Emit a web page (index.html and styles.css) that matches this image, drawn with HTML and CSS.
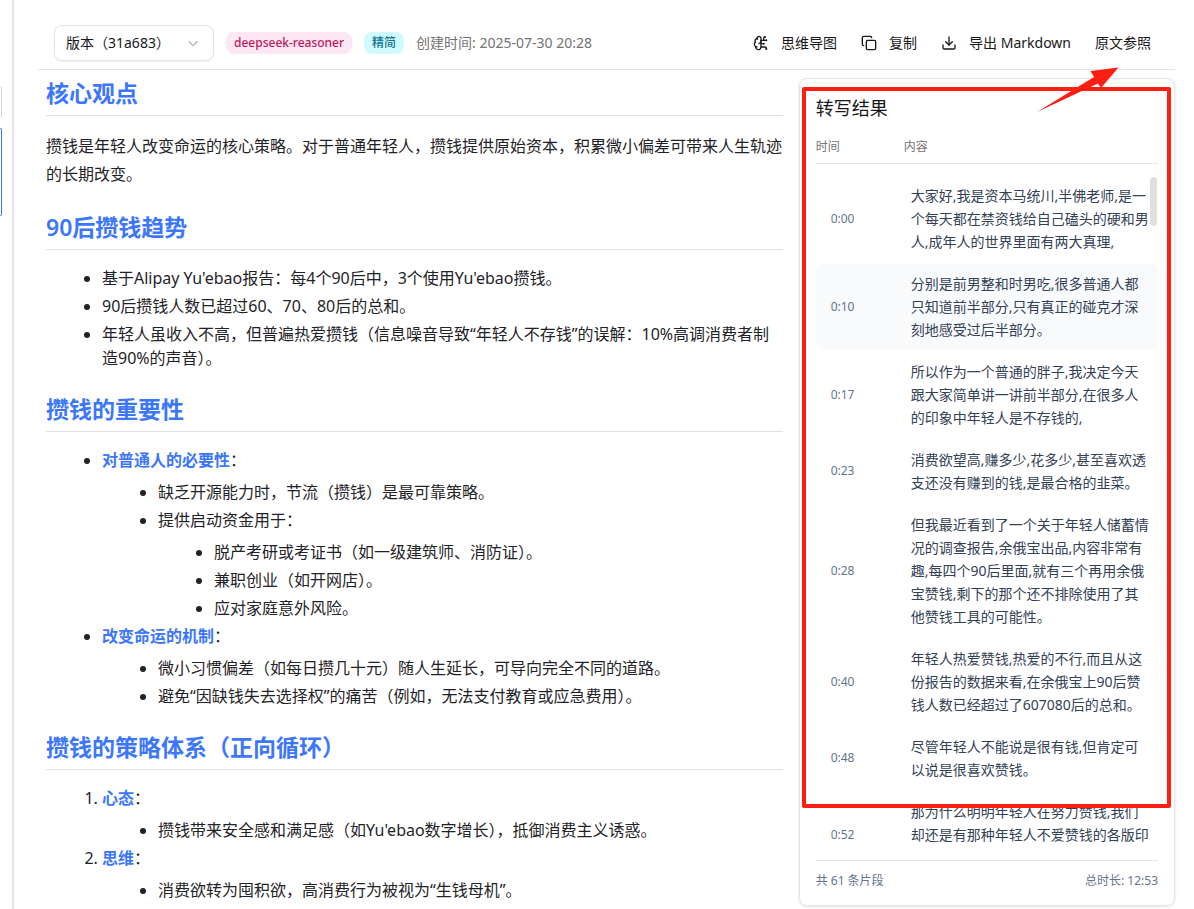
FILE: index.html
```
<!DOCTYPE html>
<html lang="zh-CN">
<head>
<meta charset="utf-8">
<meta name="viewport" content="width=device-width, initial-scale=1">
<title>核心观点</title>
<link rel="stylesheet" href="styles.css">
</head>
<body>
<div class="app">
  <aside class="rail">
    <div class="rail-item"></div>
    <div class="rail-item rail-item-active"></div>
  </aside>
  <main class="main">
    <header class="toolbar">
      <div class="toolbar-info">
        <div class="version">
          <select class="version-select" aria-label="版本">
            <option>版本（31a683）</option>
          </select>
          <svg class="version-chevron" viewBox="0 0 16 16" aria-hidden="true"><path d="m3 6 5 5 5-5"/></svg>
        </div>
        <span class="tag tag-pink">deepseek-reasoner</span>
        <span class="tag tag-cyan">精简</span>
        <span class="created">创建时间: 2025-07-30 20:28</span>
      </div>
      <div class="actions">
        <button class="action" type="button">
          <svg class="icon" viewBox="0 0 24 24" aria-hidden="true"><path d="M12 5a3 3 0 1 0-5.997.125 4 4 0 0 0-2.526 5.77 4 4 0 0 0 .556 6.588A4 4 0 1 0 12 18Z"/><path d="M9 13a4.500 4.500 0 0 0 3-4"/><path d="M6.003 5.125A3 3 0 0 0 6.401 6.500"/><path d="M3.477 10.896a4 4 0 0 1 .585-.396"/><path d="M6 18a4 4 0 0 1-1.967-.516"/><path d="M12 13h4"/><path d="M12 18h6a2 2 0 0 1 2 2v1"/><path d="M12 8h8"/><path d="M16 8V5a2 2 0 0 1 2-2"/><circle cx="16" cy="13" r=".5"/><circle cx="18" cy="3" r=".5"/><circle cx="20" cy="21" r=".5"/><circle cx="20" cy="8" r=".5"/></svg>
          思维导图
        </button>
        <button class="action" type="button">
          <svg class="icon" viewBox="0 0 24 24" aria-hidden="true"><rect x="8" y="8" width="14" height="14" rx="2"/><path d="M4 16c-1.100 0-2-.9-2-2V4c0-1.100.9-2 2-2h10c1.100 0 2 .9 2 2"/></svg>
          复制
        </button>
        <button class="action" type="button">
          <svg class="icon" viewBox="0 0 24 24" aria-hidden="true"><path d="M12 3v12"/><path d="m7 10 5 5 5-5"/><path d="M21 15v4a2 2 0 0 1-2 2H5a2 2 0 0 1-2-2v-4"/></svg>
          导出 Markdown
        </button>
        <button class="action" type="button">原文参照</button>
      </div>
    </header>
    <div class="workspace">
      <article class="markdown">
        <h2>核心观点</h2>
        <p>攒钱是年轻人改变命运的核心策略。对于普通年轻人，攒钱提供原始资本，积累微小偏差可带来人生轨迹的长期改变。</p>
        <h2>90后攒钱趋势</h2>
        <ul>
          <li>基于Alipay Yu'ebao报告：每4个90后中，3个使用Yu'ebao攒钱。</li>
          <li>90后攒钱人数已超过60、70、80后的总和。</li>
          <li>年轻人虽收入不高，但普遍热爱攒钱（信息噪音导致“年轻人不存钱”的误解：10%高调消费者制造90%的声音）。</li>
        </ul>
        <h2>攒钱的重要性</h2>
        <ul>
          <li><strong>对普通人的必要性</strong>：
            <ul>
              <li>缺乏开源能力时，节流（攒钱）是最可靠策略。</li>
              <li>提供启动资金用于：
                <ul>
                  <li>脱产考研或考证书（如一级建筑师、消防证）。</li>
                  <li>兼职创业（如开网店）。</li>
                  <li>应对家庭意外风险。</li>
                </ul>
              </li>
            </ul>
          </li>
          <li><strong>改变命运的机制</strong>：
            <ul>
              <li>微小习惯偏差（如每日攒几十元）随人生延长，可导向完全不同的道路。</li>
              <li>避免“因缺钱失去选择权”的痛苦（例如，无法支付教育或应急费用）。</li>
            </ul>
          </li>
        </ul>
        <h2>攒钱的策略体系（正向循环）</h2>
        <ol>
          <li><strong>心态</strong>：
            <ul>
              <li>攒钱带来安全感和满足感（如Yu'ebao数字增长），抵御消费主义诱惑。</li>
            </ul>
          </li>
          <li><strong>思维</strong>：
            <ul>
              <li>消费欲转为囤积欲，高消费行为被视为“生钱母机”。</li>
            </ul>
          </li>
        </ol>
      </article>
      <section class="transcript">
        <h3 class="transcript-title">转写结果</h3>
        <div class="transcript-head"><span>时间</span><span>内容</span></div>
        <div class="segments">
          <div class="segment"><time>0:00</time><p>大家好,我是资本马统川,半佛老师,是一个每天都在禁资钱给自己磕头的硬和男人,成年人的世界里面有两大真理,</p></div>
          <div class="segment segment-active"><time>0:10</time><p>分别是前男整和时男吃,很多普通人都只知道前半部分,只有真正的碰克才深刻地感受过后半部分。</p></div>
          <div class="segment"><time>0:17</time><p>所以作为一个普通的胖子,我决定今天跟大家简单讲一讲前半部分,在很多人的印象中年轻人是不存钱的,</p></div>
          <div class="segment"><time>0:23</time><p>消费欲望高,赚多少,花多少,甚至喜欢透支还没有赚到的钱,是最合格的韭菜。</p></div>
          <div class="segment"><time>0:28</time><p>但我最近看到了一个关于年轻人储蓄情况的调查报告,余俄宝出品,内容非常有趣,每四个90后里面,就有三个再用余俄宝赞钱,剩下的那个还不排除使用了其他赞钱工具的可能性。</p></div>
          <div class="segment"><time>0:40</time><p>年轻人热爱赞钱,热爱的不行,而且从这份报告的数据来看,在余俄宝上90后赞钱人数已经超过了607080后的总和。</p></div>
          <div class="segment"><time>0:48</time><p>尽管年轻人不能说是很有钱,但肯定可以说是很喜欢赞钱。</p></div>
          <div class="segment"><time>0:52</time><p>那为什么明明年轻人在努力赞钱,我们却还是有那种年轻人不爱赞钱的各版印<br>&nbsp;</p></div>
          <span class="scroll-thumb"></span>
        </div>
        <footer class="transcript-foot"><span>共 61 条片段</span><span>总时长: 12:53</span></footer>
        <div class="callout-box"></div>
        <svg class="callout-arrow" viewBox="0 0 82 46" aria-hidden="true"><path d="M81.500.5 53.500 4l3.500 6L0 45l61-28.500L64 21Z"/></svg>
      </section>
    </div>
  </main>
</div>
</body>
</html>
```
FILE: styles.css
```
* {
  box-sizing: border-box;
}

body {
  margin: 0;
  background: #fff;
  color: #18181b;
  font-family: "Noto Sans", "Noto Sans CJK SC", sans-serif;
  font-size: 14px;
  line-height: 20px;
}

h2, h3, p, ul, ol {
  margin: 0;
}

.app {
  display: flex;
  height: 100vh;
  overflow: hidden;
}

.rail {
  flex: none;
  display: flex;
  flex-direction: column;
  gap: 11px;
  width: 14px;
  padding: 87px 10px 0 0;
  border-right: 2px solid #e4e4e7;
}

.rail-item {
  height: 30px;
  border: 1px solid #d4d4d8;
  border-left: 0;
  border-radius: 0 3px 3px 0;
}

.rail-item-active {
  height: 88px;
  border-color: #3c77fb;
}

.main {
  flex: 1;
  min-width: 0;
  display: flex;
  flex-direction: column;
  padding: 0 19px 3px 24px;
}

.toolbar {
  flex: none;
  display: flex;
  align-items: center;
  justify-content: space-between;
  padding: 25px 24px 8px 16px;
  border-bottom: 1px solid #e4e4e7;
}

.toolbar-info {
  display: flex;
  align-items: center;
  gap: 12px;
}

.version {
  position: relative;
  width: 160px;
}

.version-select {
  display: block;
  width: 100%;
  height: 36px;
  padding: 0 11px;
  appearance: none;
  border: 1px solid #e4e4e7;
  border-radius: 8px;
  background: #fff;
  box-shadow: 0 1px 2px rgba(0, 0, 0, .06);
  color: #18181b;
  font: inherit;
}

.version-chevron {
  position: absolute;
  top: 11px;
  right: 14px;
  width: 14px;
  height: 14px;
  fill: none;
  stroke: #b4b4b8;
  stroke-width: 1.500;
  pointer-events: none;
}

.tag {
  padding: 1px 8px;
  border-radius: 8px;
  font-size: 12px;
  font-weight: 500;
}

.tag-pink {
  background: #fce7f3;
  color: #be185d;
}

.tag-cyan {
  background: #cffafe;
  color: #0e7490;
}

.created {
  color: #737373;
}

.actions {
  display: flex;
  align-items: center;
  gap: 24px;
}

.action {
  display: flex;
  align-items: center;
  gap: 12px;
  padding: 0;
  border: 0;
  background: none;
  color: #18181b;
  font: inherit;
  white-space: nowrap;
}

.icon {
  width: 16px;
  height: 16px;
  fill: none;
  stroke: currentColor;
  stroke-width: 2;
  stroke-linecap: round;
  stroke-linejoin: round;
}

.workspace {
  flex: 1;
  min-height: 0;
  display: grid;
  grid-template-columns: minmax(0, 2fr) minmax(0, 1fr);
  grid-template-rows: minmax(0, 1fr);
  gap: 8px;
}

.markdown {
  padding: 8px;
  color: #1f2328;
  font-size: 16px;
  line-height: 24px;
}

.markdown h2 {
  margin: 24px 0 16px;
  padding-bottom: 6px;
  border-bottom: 1px solid #dfe2e5;
  color: #3c77fb;
  font-size: 23px;
  font-weight: 600;
  line-height: 31px;
}

.markdown h2:first-child {
  margin-top: 0;
}

.markdown p {
  line-height: 28px;
}

.markdown ul,
.markdown ol {
  display: flex;
  flex-direction: column;
  gap: 4px;
  padding: 0 0 0 56px;
}

.markdown ul {
  list-style: disc;
}

.markdown li ul {
  padding-top: 8px;
}

.markdown strong {
  color: #3c77fb;
  font-weight: 600;
}

.transcript {
  position: relative;
  display: flex;
  flex-direction: column;
  min-height: 0;
  margin-top: 8px;
  padding: 16px 16px 14px;
  border: 1px solid #e4e4e7;
  border-radius: 8px;
  box-shadow: 0 1px 3px rgba(0, 0, 0, .1);
}

.transcript-title {
  font-size: 18px;
  font-weight: 400;
  line-height: 26px;
}

.transcript-head {
  display: grid;
  grid-template-columns: 80px 1fr;
  gap: 8px;
  margin-top: 16px;
  padding-bottom: 6px;
  border-bottom: 1px solid #e4e4e7;
  color: #737373;
  font-size: 12px;
}

.segments {
  position: relative;
  flex: 1;
  min-height: 0;
  display: flex;
  flex-direction: column;
  gap: 3px;
  margin: 12px 0;
  overflow: hidden;
}

.segment {
  flex: none;
  display: grid;
  grid-template-columns: 80px 1fr;
  align-items: center;
  gap: 8px;
  padding: 8px 7px;
  border-radius: 8px;
}

.segment-active {
  background: #f8fafc;
}

.segment time {
  padding-left: 8px;
  color: #64748b;
  font-size: 12px;
}

.segment p {
  color: #334155;
  line-height: 23px;
}

.scroll-thumb {
  position: absolute;
  top: 1px;
  right: 1px;
  width: 7px;
  height: 49px;
  border-radius: 4px;
  background: #e0e0e0;
}

.transcript-foot {
  display: flex;
  justify-content: space-between;
  padding-top: 10px;
  border-top: 1px solid #e4e4e7;
  color: #64748b;
  font-size: 12px;
}

.callout-box {
  position: absolute;
  inset: 8px 3px 97px 2px;
  border: 4px solid #ff1f12;
  border-radius: 2px;
  pointer-events: none;
}

.callout-arrow {
  position: absolute;
  top: -12px;
  right: 55px;
  width: 82px;
  height: 46px;
  fill: #ff1f12;
  pointer-events: none;
}
```
